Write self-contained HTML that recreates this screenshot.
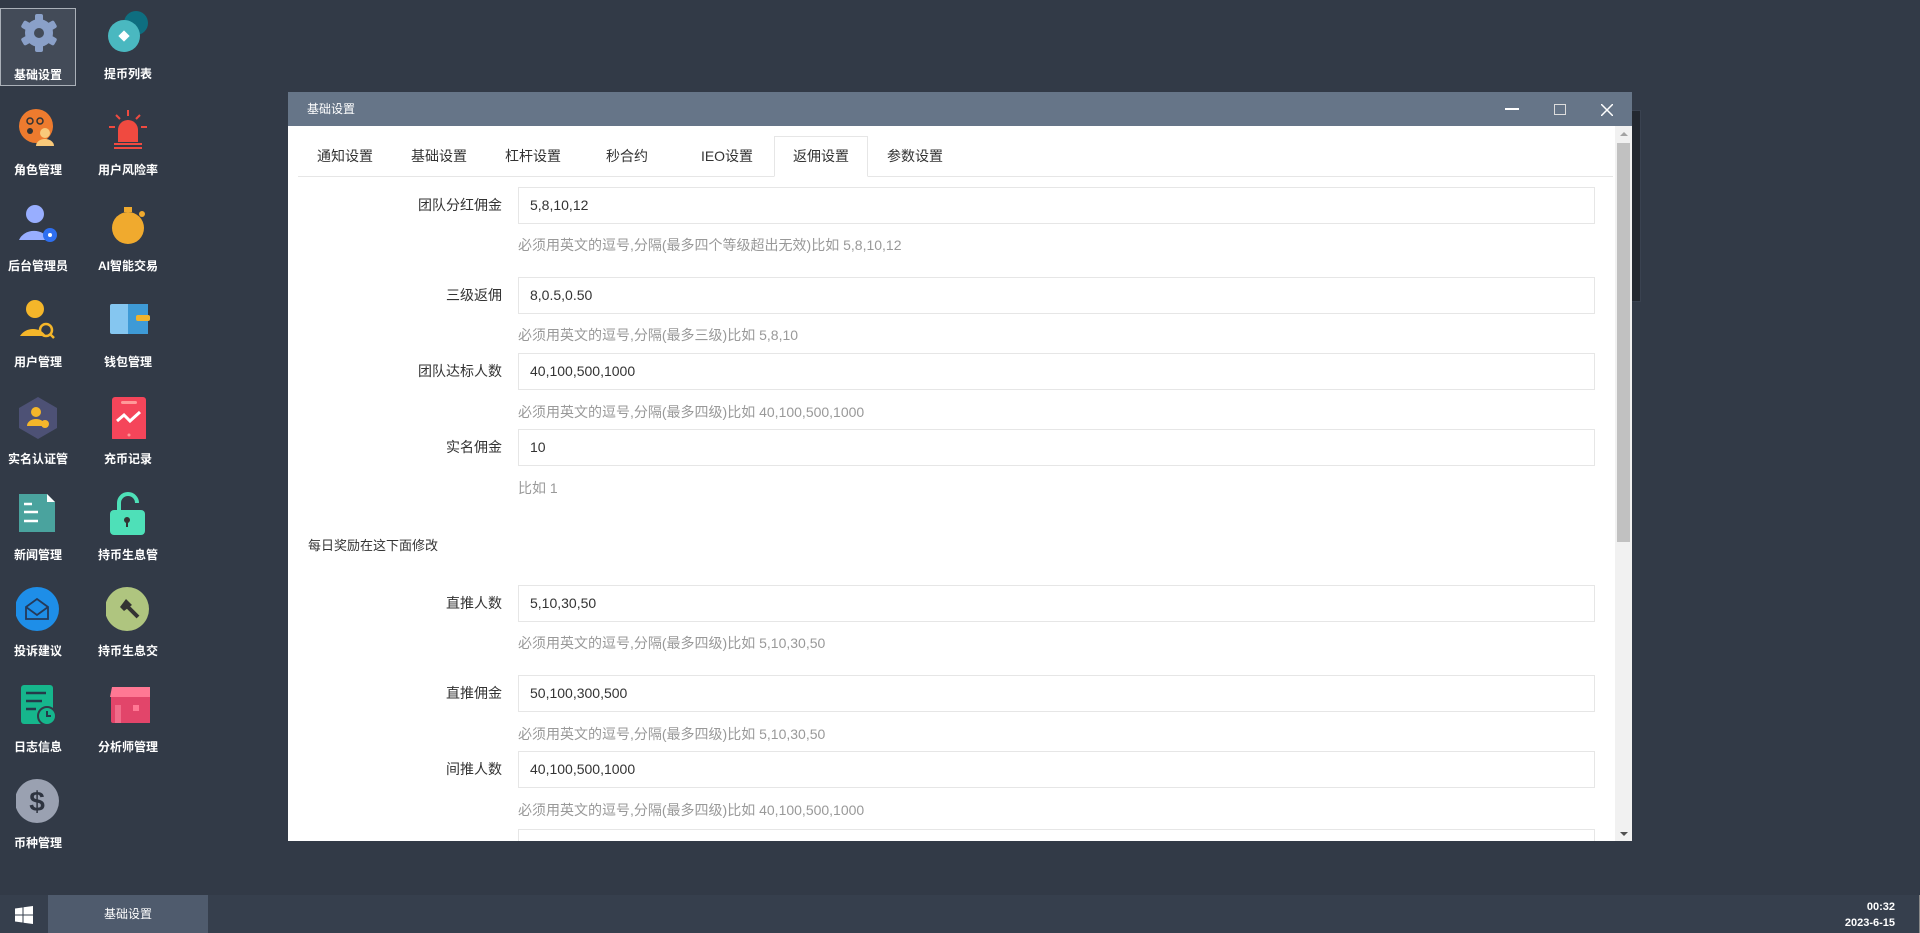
<!DOCTYPE html>
<html><head><meta charset="utf-8"><style>
*{margin:0;padding:0;box-sizing:border-box}
body{width:1920px;height:933px;background:#323a47;position:relative;overflow:hidden;font-family:"Liberation Sans","Noto Sans CJK SC",sans-serif}
.ic{position:absolute;width:76px;height:78px;text-align:center;color:#fff;font-size:12px;font-weight:bold}
.ic svg{position:absolute;left:16px;top:2px}
.ic span{position:absolute;left:0;right:0;top:57px}
.sel{border:1px solid #aab0b8;background:#434b58}
.win{position:absolute;left:288px;top:92px;width:1344px;height:749px;background:#fff;overflow:hidden}
.tb{height:34px;background:#667588;color:#fff;font-size:12px;line-height:34px;padding-left:19px}
.abs{position:absolute}
.tab{position:absolute;top:44px;width:94px;height:41px;line-height:40px;text-align:center;font-size:14px;color:#333}
.lbl{position:absolute;right:1130px;font-size:14px;color:#333;line-height:37px;text-align:right}
.inp{position:absolute;left:230px;width:1077px;height:37px;border:1px solid #e6e6e6;font-size:14px;color:#333;line-height:35px;padding-left:11px}
.help{position:absolute;left:230px;font-size:14px;color:#999}
</style></head><body>
<div class="abs" style="left:1340px;top:110px;width:301px;height:192px;background:#232830;border:1px solid #3a4250"></div>

<div class="ic sel" style="left:0;top:8px"><svg width="44" height="44" viewBox="0 0 44 44"><g fill="#8aa0c8"><circle cx="22" cy="22" r="14"/><g><rect x="18" y="3" width="8" height="38" rx="2"/><rect x="18" y="3" width="8" height="38" rx="2" transform="rotate(60 22 22)"/><rect x="18" y="3" width="8" height="38" rx="2" transform="rotate(120 22 22)"/></g></g><circle cx="22" cy="22" r="5" fill="#434b58"/></svg><span>基础设置</span></div>
<div class="ic" style="left:90px;top:8px"><svg width="44" height="44" viewBox="0 0 44 44"><circle cx="30" cy="13" r="12" fill="#0e6e80"/><circle cx="18" cy="26" r="16" fill="#4ab8c0"/><rect x="14" y="22" width="8" height="8" fill="#fff" transform="rotate(45 18 26)"/></svg><span>提币列表</span></div>

<div class="ic" style="left:0;top:104px"><svg width="44" height="44" viewBox="0 0 44 44"><circle cx="20" cy="20" r="17" fill="#ee7b2e"/><circle cx="14" cy="15" r="3" fill="none" stroke="#333" stroke-width="1.5"/><circle cx="24" cy="15" r="3" fill="none" stroke="#333" stroke-width="1.5"/><circle cx="14" cy="25" r="3" fill="#333"/><circle cx="29" cy="27" r="5" fill="#f9c97a"/><path d="M20 40a9 7 0 0 1 18 0z" fill="#f9c97a"/></svg><span>角色管理</span></div>
<div class="ic" style="left:90px;top:104px"><svg width="44" height="44" viewBox="0 0 44 44"><path d="M12 36V24a10 10 0 0 1 20 0v12z" fill="#f04a40"/><rect x="8" y="37" width="28" height="2" fill="#f04a40"/><rect x="8" y="41" width="28" height="2" fill="#f04a40"/><g stroke="#f04a40" stroke-width="2"><path d="M22 4v6M10 9l4 4M34 9l-4 4M3 21h6M35 21h6"/></g></svg><span>用户风险率</span></div>

<div class="ic" style="left:0;top:200px"><svg width="44" height="44" viewBox="0 0 44 44"><circle cx="19" cy="12" r="9" fill="#98aeff"/><path d="M3 38a16 14 0 0 1 30 0z" fill="#98aeff"/><circle cx="34" cy="33" r="7" fill="#2f6ff0"/><circle cx="34" cy="33" r="2" fill="#fff"/></svg><span>后台管理员</span></div>
<div class="ic" style="left:90px;top:200px"><svg width="44" height="44" viewBox="0 0 44 44"><circle cx="22" cy="26" r="16" fill="#f0aa2e"/><rect x="18" y="5" width="8" height="5" fill="#f0aa2e"/><circle cx="36" cy="12" r="3" fill="#f0aa2e"/></svg><span>AI智能交易</span></div>

<div class="ic" style="left:0;top:296px"><svg width="44" height="44" viewBox="0 0 44 44"><circle cx="19" cy="11" r="9" fill="#f5b62a"/><path d="M4 38a15 14 0 0 1 26 0z" fill="#f5b62a"/><circle cx="30" cy="32" r="6" fill="none" stroke="#f5b62a" stroke-width="2.5"/><path d="M34 36l4 4" stroke="#f5b62a" stroke-width="2.5"/></svg><span>用户管理</span></div>
<div class="ic" style="left:90px;top:296px"><svg width="44" height="44" viewBox="0 0 44 44"><rect x="4" y="6" width="38" height="30" rx="2" fill="#85c6f0"/><rect x="22" y="6" width="20" height="30" fill="#3e9ad6"/><rect x="30" y="17" width="14" height="6" rx="2" fill="#f1b32c"/></svg><span>钱包管理</span></div>

<div class="ic" style="left:0;top:393px"><svg width="44" height="44" viewBox="0 0 44 44"><path d="M22 2l19 11v20L22 44 3 33V13z" fill="#4d5175"/><circle cx="20" cy="17" r="5" fill="#f5b62a"/><path d="M11 31a9 7 0 0 1 18 0z" fill="#f5b62a"/><circle cx="29" cy="29" r="4" fill="#f5b62a"/></svg><span>实名认证管</span></div>
<div class="ic" style="left:90px;top:393px"><svg width="44" height="44" viewBox="0 0 44 44"><rect x="6" y="2" width="34" height="44" rx="3" fill="#f5455a"/><rect x="15" y="6" width="16" height="3" rx="1.5" fill="#f99"/><path d="M11 26l7-6 6 6 10-9" stroke="#fff" stroke-width="3" fill="none"/><circle cx="23" cy="40" r="1.5" fill="#f99"/></svg><span>充币记录</span></div>

<div class="ic" style="left:0;top:489px"><svg width="44" height="44" viewBox="0 0 44 44"><path d="M3 3h28l8 8v30H3z" fill="#4aa39e"/><path d="M31 3v8h8z" fill="#fff"/><g stroke="#fff" stroke-width="2.5"><path d="M8 13h8M8 21h14M8 30h14"/></g></svg><span>新闻管理</span></div>
<div class="ic" style="left:90px;top:489px"><svg width="44" height="44" viewBox="0 0 44 44"><path d="M13 20v-8a9 9 0 0 1 18 0" stroke="#4ee0b8" stroke-width="4" fill="none"/><rect x="4" y="19" width="35" height="25" rx="4" fill="#4ee0b8"/><circle cx="21" cy="29" r="3" fill="#333"/><rect x="20" y="30" width="2" height="6" fill="#333"/></svg><span>持币生息管</span></div>

<div class="ic" style="left:0;top:585px"><svg width="44" height="44" viewBox="0 0 44 44"><circle cx="21" cy="22" r="22" fill="#1e8ee8"/><path d="M10 20l11-8 11 8v12H10z" stroke="#253a5a" stroke-width="1.8" fill="none"/><path d="M10 20l11 8 11-8" stroke="#253a5a" stroke-width="1.8" fill="none"/></svg><span>投诉建议</span></div>
<div class="ic" style="left:90px;top:585px"><svg width="44" height="44" viewBox="0 0 44 44"><circle cx="21" cy="22" r="22" fill="#afc57f"/><path d="M14 20l6-8 6 6-8 6z" fill="#333"/><path d="M22 20l10 10" stroke="#333" stroke-width="4"/></svg><span>持币生息交</span></div>

<div class="ic" style="left:0;top:681px"><svg width="44" height="44" viewBox="0 0 44 44"><rect x="5" y="2" width="32" height="39" rx="3" fill="#16b68c"/><g stroke="#253a4a" stroke-width="2.5"><path d="M10 10h20M10 18h16M10 26h10"/></g><circle cx="31" cy="33" r="9" fill="#16b68c" stroke="#323a47" stroke-width="2"/><path d="M31 28v5h4" stroke="#253a4a" stroke-width="2" fill="none"/></svg><span>日志信息</span></div>
<div class="ic" style="left:90px;top:681px"><svg width="44" height="44" viewBox="0 0 44 44"><rect x="5" y="12" width="40" height="28" rx="2" fill="#e2456a"/><path d="M6 4h38l2 10H4z" fill="#ff7894"/><rect x="9" y="22" width="6" height="18" fill="#f06c8a"/><rect x="27" y="22" width="6" height="6" fill="#ff7894"/></svg><span>分析师管理</span></div>

<div class="ic" style="left:0;top:777px"><svg width="44" height="44" viewBox="0 0 44 44"><circle cx="21" cy="22" r="22" fill="#9aa1b1"/><text x="21" y="32" text-anchor="middle" font-size="28" font-weight="bold" fill="#2e3440" font-family="Liberation Sans">$</text></svg><span>币种管理</span></div>

<div class="win">
 <div class="tb">基础设置</div>
 <div class="abs" style="left:1217px;top:16px;width:14px;height:2px;background:#fff"></div>
 <div class="abs" style="left:1266px;top:12px;width:12px;height:11px;border:1.5px solid #ddd"></div>
 <svg class="abs" style="left:1313px;top:12px" width="12" height="12"><path d="M0 0L12 12M12 0L0 12" stroke="#fff" stroke-width="1.5"/></svg>
 <div class="abs" style="left:10px;top:84px;width:1315px;height:1px;background:#e6e6e6"></div>
 <div class="tab" style="left:10px">通知设置</div>
 <div class="tab" style="left:104px">基础设置</div>
 <div class="tab" style="left:198px">杠杆设置</div>
 <div class="tab" style="left:292px">秒合约</div>
 <div class="tab" style="left:392px">IEO设置</div>
 <div class="tab" style="left:486px;border:1px solid #e6e6e6;border-bottom:1px solid #fff;background:#fff;line-height:38px">返佣设置</div>
 <div class="tab" style="left:580px">参数设置</div>

 <div class="lbl" style="top:95px">团队分红佣金</div><div class="inp" style="top:95px">5,8,10,12</div>
 <div class="help" style="top:143px">必须用英文的逗号,分隔(最多四个等级超出无效)比如 5,8,10,12</div>
 <div class="lbl" style="top:185px">三级返佣</div><div class="inp" style="top:185px">8,0.5,0.50</div>
 <div class="help" style="top:233px">必须用英文的逗号,分隔(最多三级)比如 5,8,10</div>
 <div class="lbl" style="top:261px">团队达标人数</div><div class="inp" style="top:261px">40,100,500,1000</div>
 <div class="help" style="top:310px">必须用英文的逗号,分隔(最多四级)比如 40,100,500,1000</div>
 <div class="lbl" style="top:337px">实名佣金</div><div class="inp" style="top:337px">10</div>
 <div class="help" style="top:386px">比如 1</div>
 <div class="abs" style="left:20px;top:443px;font-size:13px;color:#333">每日奖励在这下面修改</div>
 <div class="lbl" style="top:493px">直推人数</div><div class="inp" style="top:493px">5,10,30,50</div>
 <div class="help" style="top:541px">必须用英文的逗号,分隔(最多四级)比如 5,10,30,50</div>
 <div class="lbl" style="top:583px">直推佣金</div><div class="inp" style="top:583px">50,100,300,500</div>
 <div class="help" style="top:632px">必须用英文的逗号,分隔(最多四级)比如 5,10,30,50</div>
 <div class="lbl" style="top:659px">间推人数</div><div class="inp" style="top:659px">40,100,500,1000</div>
 <div class="help" style="top:708px">必须用英文的逗号,分隔(最多四级)比如 40,100,500,1000</div>
 <div class="inp" style="top:737px"></div>

 <div class="abs" style="left:1327px;top:34px;width:17px;height:715px;background:#f1f1f1"></div>
 <div class="abs" style="left:1329px;top:51px;width:13px;height:399px;background:#c1c1c1"></div>
 <div class="abs" style="left:1332px;top:40px;width:0;height:0;border-left:4px solid transparent;border-right:4px solid transparent;border-bottom:4px solid #a3a3a3"></div>
 <div class="abs" style="left:1332px;top:740px;width:0;height:0;border-left:4px solid transparent;border-right:4px solid transparent;border-top:4px solid #505050"></div>
</div>

<div class="abs" style="left:0;top:895px;width:1920px;height:38px;background:#363f4d"></div>
<svg class="abs" style="left:15px;top:906px" width="18" height="18"><path d="M0 2.5L7.5 1.5V8.5H0zM8.5 1.3L18 0V8.5H8.5zM0 9.5H7.5V16.5L0 15.5zM8.5 9.5H18V18L8.5 16.7z" fill="#fff"/></svg>
<div class="abs" style="left:48px;top:895px;width:160px;height:38px;background:#4f5b6d;color:#fff;font-size:12px;line-height:38px;text-align:center">基础设置</div>
<div class="abs" style="right:25px;top:899px;color:#fff;font-size:11px;font-weight:bold;text-align:right;line-height:16px">00:32<br>2023-6-15</div>
<div class="abs" style="right:0;top:895px;width:1px;height:38px;background:#888"></div>
</body></html>
